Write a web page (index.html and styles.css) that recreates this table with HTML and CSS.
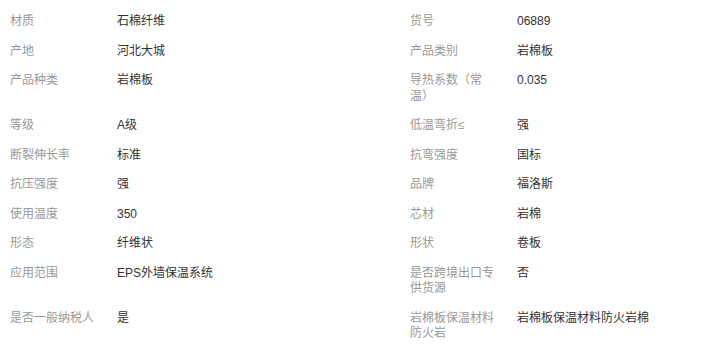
FILE: index.html
```html
<!DOCTYPE html>
<html lang="zh">
<head>
<meta charset="utf-8">
<link rel="stylesheet" href="styles.css">
</head>
<body>
<div class="attrs">
  <div class="item"><div class="label">材质</div><div class="value">石棉纤维</div></div>
  <div class="item"><div class="label">货号</div><div class="value">06889</div></div>
  <div class="item"><div class="label">产地</div><div class="value">河北大城</div></div>
  <div class="item"><div class="label">产品类别</div><div class="value">岩棉板</div></div>
  <div class="item"><div class="label">产品种类</div><div class="value">岩棉板</div></div>
  <div class="item"><div class="label">导热系数（常温）</div><div class="value">0.035</div></div>
  <div class="item"><div class="label">等级</div><div class="value">A级</div></div>
  <div class="item"><div class="label">低温弯折≤</div><div class="value">强</div></div>
  <div class="item"><div class="label">断裂伸长率</div><div class="value">标准</div></div>
  <div class="item"><div class="label">抗弯强度</div><div class="value">国标</div></div>
  <div class="item"><div class="label">抗压强度</div><div class="value">强</div></div>
  <div class="item"><div class="label">品牌</div><div class="value">福洛斯</div></div>
  <div class="item"><div class="label">使用温度</div><div class="value">350</div></div>
  <div class="item"><div class="label">芯材</div><div class="value">岩棉</div></div>
  <div class="item"><div class="label">形态</div><div class="value">纤维状</div></div>
  <div class="item"><div class="label">形状</div><div class="value">卷板</div></div>
  <div class="item"><div class="label">应用范围</div><div class="value">EPS外墙保温系统</div></div>
  <div class="item"><div class="label">是否跨境出口专供货源</div><div class="value">否</div></div>
  <div class="item"><div class="label">是否一般纳税人</div><div class="value">是</div></div>
  <div class="item"><div class="label">岩棉板保温材料防火岩</div><div class="value">岩棉板保温材料防火岩棉</div></div>
</div>
</body>
</html>
```
FILE: styles.css
```css
html, body {
  margin: 0;
  padding: 0;
  background: #fff;
}
body {
  font-family: "Liberation Sans", "Noto Sans CJK SC", sans-serif;
  font-size: 12px;
  line-height: 15.5px;
}
.attrs {
  display: grid;
  grid-template-columns: 400px 322px;
  padding-top: 7px;
}
.item {
  display: flex;
  padding: 7px 0;
}
.label {
  width: 90px;
  padding: 0 17px 0 10px;
  flex: none;
  color: #999;
}
.value {
  color: #333;
}
```
